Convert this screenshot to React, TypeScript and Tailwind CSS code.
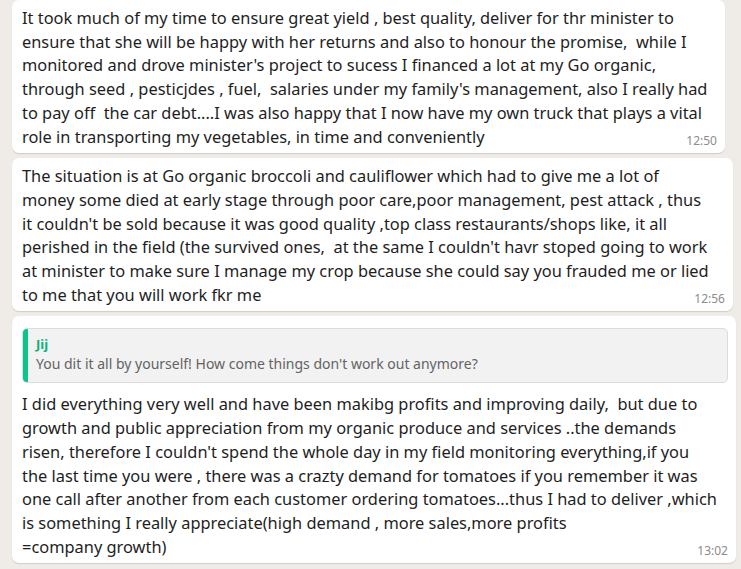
import React from 'react';

interface BubbleProps {
  width: string;
  time: string;
  lines: string[];
  quote?: { name: string; text: string };
}

const first = [
  'It took much of my time to ensure great yield , best quality, deliver for thr minister to',
  'ensure that she will be happy with her returns and also to honour the promise,  while I',
  "monitored and drove minister's project to sucess I financed a lot at my Go organic,",
  "through seed , pesticjdes , fuel,  salaries under my family's management, also I really had",
  'to pay off  the car debt....I was also happy that I now have my own truck that plays a vital',
  'role in transporting my vegetables, in time and conveniently',
];

const second = [
  'The situation is at Go organic broccoli and cauliflower which had to give me a lot of',
  'money some died at early stage through poor care,poor management, pest attack , thus',
  "it couldn't be sold because it was good quality ,top class restaurants/shops like, it all",
  "perished in the field (the survived ones,  at the same I couldn't havr stoped going to work",
  'at minister to make sure I manage my crop because she could say you frauded me or lied',
  'to me that you will work fkr me',
];

const third = [
  'I did everything very well and have been makibg profits and improving daily,  but due to',
  'growth and public appreciation from my organic produce and services ..the demands',
  "risen, therefore I couldn't spend the whole day in my field monitoring everything,if you",
  'the last time you were , there was a crazty demand for tomatoes if you remember it was',
  'one call after another from each customer ordering tomatoes...thus I had to deliver ,which',
  'is something I really appreciate(high demand , more sales,more profits',
  '=company growth)',
];

function Bubble({ width, time, lines, quote }: BubbleProps) {
  return (
    <div
      className={`relative ${width} rounded-[7px] bg-white pl-[10px] pr-2 pt-[6px] pb-[5px] shadow-[0_1px_1px_rgba(11,20,26,0.14)]`}
    >
      {quote && (
        <div className="mt-[6px] mb-[9px] flex overflow-hidden rounded-[5px] border border-[#dcdcdc] bg-[#f2f2f2]">
          <div className="w-[5px] shrink-0 bg-[#0cc48e]" />
          <div className="flex flex-col pl-2 pt-[6px] pb-[8px]">
            <span className="text-[13px] font-bold leading-[19px] text-[#0cb07f]">{quote.name}</span>
            <span className="text-[14px] leading-[20px] text-[#636363]">{quote.text}</span>
          </div>
        </div>
      )}
      <div className="text-[16.4px] leading-[23.7px] text-[#1e1e1e]">
        {lines.map((l, i) => (
          <div key={i} className="whitespace-pre">
            {l}
          </div>
        ))}
      </div>
      <span className="absolute bottom-[4px] right-[8px] text-[12px] leading-4 text-[#8c8c8c]">{time}</span>
    </div>
  );
}

export default function App() {
  return (
    <div className="h-[569px] w-[741px] overflow-hidden bg-[#efebe6] font-['Noto_Sans',sans-serif]">
      <div className="flex flex-col gap-[5px] pl-3">
        <Bubble width="w-[713px]" time="12:50" lines={first} />
        <Bubble width="w-[721px]" time="12:56" lines={second} />
        <Bubble
          width="w-[724px]"
          time="13:02"
          lines={third}
          quote={{ name: 'Jij', text: "You dit it all by yourself! How come things don't work out anymore?" }}
        />
      </div>
    </div>
  );
}
